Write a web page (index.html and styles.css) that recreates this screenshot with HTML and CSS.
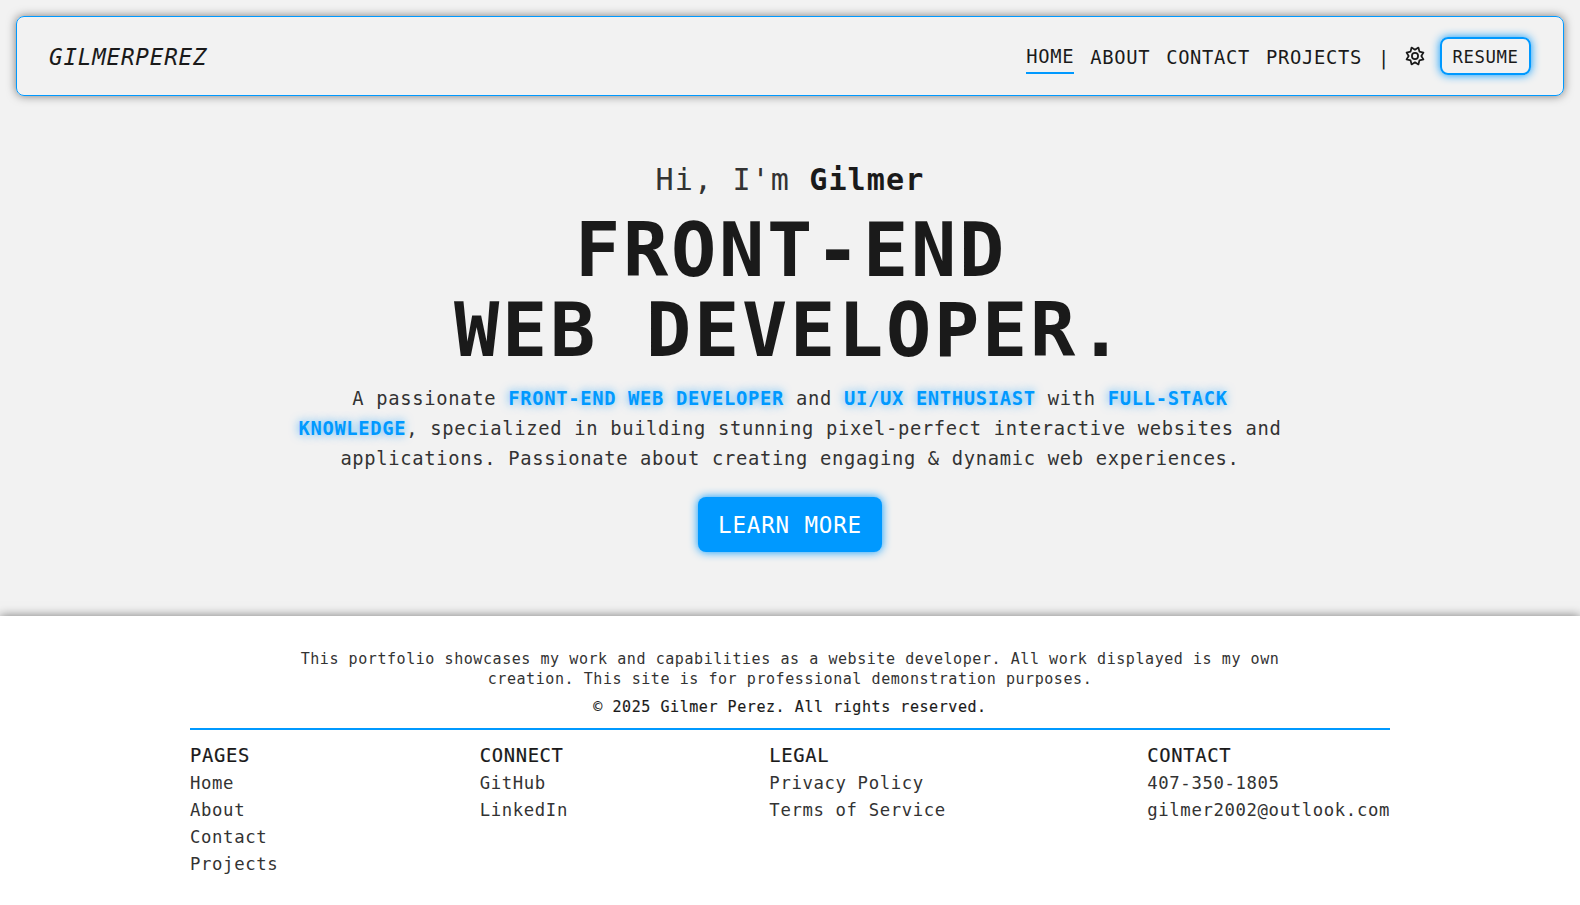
FILE: index.html
```html
<!DOCTYPE html>
<html lang="en">
<head>
<meta charset="utf-8">
<title>Gilmer Perez</title>
<link rel="stylesheet" href="styles.css">
</head>
<body>
<header class="site-header">
  <a class="logo">GILMERPEREZ</a>
  <nav class="nav">
    <a class="nav-link active">HOME</a>
    <a class="nav-link">ABOUT</a>
    <a class="nav-link">CONTACT</a>
    <a class="nav-link">PROJECTS</a>
    <span class="divider">|</span>
    <svg class="gear" viewBox="0 0 24 24" width="20" height="20">
      <path d="M12 4.4 L16.1 1.9 L17.3 6.7 L22.1 7.9 L19.6 12 L22.1 16.1 L17.3 17.3 L16.1 22.1 L12 19.6 L7.9 22.1 L6.7 17.3 L1.9 16.1 L4.4 12 L1.9 7.9 L6.7 6.7 L7.9 1.9 Z"/>
      <circle cx="12" cy="12" r="3.7"/>
    </svg>
    <a class="resume">RESUME</a>
  </nav>
</header>
<main class="hero">
  <p class="greeting">Hi, I'm <strong>Gilmer</strong></p>
  <h1 class="title">FRONT-END<br>WEB DEVELOPER.</h1>
  <p class="intro">A passionate <b>FRONT-END WEB DEVELOPER</b> and <b>UI/UX ENTHUSIAST</b> with <b>FULL-STACK<br>KNOWLEDGE</b>, specialized in building stunning pixel-perfect interactive websites and<br>applications. Passionate about creating engaging &amp; dynamic web experiences.</p>
  <a class="learn">LEARN MORE</a>
</main>
<footer class="site-footer">
  <p class="note">This portfolio showcases my work and capabilities as a website developer. All work displayed is my own<br>creation. This site is for professional demonstration purposes.</p>
  <p class="copyright">© 2025 Gilmer Perez. All rights reserved.</p>
  <div class="columns">
    <div class="column"><h2>PAGES</h2><a>Home</a><a>About</a><a>Contact</a><a>Projects</a></div>
    <div class="column"><h2>CONNECT</h2><a>GitHub</a><a>LinkedIn</a></div>
    <div class="column"><h2>LEGAL</h2><a>Privacy Policy</a><a>Terms of Service</a></div>
    <div class="column"><h2>CONTACT</h2><a>407-350-1805</a><a>gilmer2002@outlook.com</a></div>
  </div>
</footer>
</body>
</html>
```
FILE: styles.css
```css
* { box-sizing: border-box; margin: 0; padding: 0; letter-spacing: 0.0363em; }
body {
  height: 905px;
  overflow: hidden;
  display: flex;
  flex-direction: column;
  background: #f2f2f2;
  color: #1a1a1a;
  font-family: "DejaVu Sans Mono", monospace;
}
.site-header {
  flex: none;
  height: 80px;
  margin: 16px 16px 0;
  padding: 0 32px;
  display: flex;
  align-items: center;
  justify-content: space-between;
  border: 1px solid #0099ff;
  border-radius: 8px;
  box-shadow: 0 0 10px rgba(0, 0, 0, 0.5);
}
.logo { padding-top: 2px; font-size: 22.56px; line-height: 24px; font-style: italic; }
.nav { display: flex; align-items: center; gap: 16px; font-size: 18.8px; line-height: 24px; }
.nav-link { padding-top: 4px; }
.nav-link.active { padding: 7px 0 3px; border-bottom: 2px solid #0099ff; }
.divider { width: 10px; padding-top: 5px; }
.gear { margin: 0 -1px 0 1px; fill: none; stroke: #1a1a1a; stroke-width: 2.1; stroke-linejoin: round; }
.resume {
  width: 91px;
  height: 38px;
  padding-top: 1px;
  border: 2px solid #0099ff;
  border-radius: 8px;
  box-shadow: 0 0 10px #0099ff;
  font-size: 17.3px;
  line-height: 34px;
  text-align: center;
}
.hero { height: 520px; padding-top: 64px; text-align: center; }
.greeting { font-size: 30.08px; line-height: 40px; color: #333; }
.greeting strong { color: #1a1a1a; }
.title { margin-top: 10px; font-size: 75.2px; line-height: 80px; font-weight: 700; text-indent: 2px; }
.intro { margin-top: 14px; font-size: 18.8px; line-height: 30px; color: #333; }
.intro b { color: #0099ff; text-shadow: 0 0 10px rgba(0, 153, 255, 0.7); }
.learn {
  display: block;
  width: 184px;
  height: 55px;
  margin: 23px auto 0;
  padding-top: 1px;
  border-radius: 8px;
  background: #0099ff;
  box-shadow: 0 0 10px #0099ff;
  color: #fff;
  font-size: 22.56px;
  line-height: 55px;
}
.site-footer {
  flex: 1;
  padding: 33px 180px 0;
  background: #fff;
  box-shadow: 0 0 10px rgba(0, 0, 0, 0.5);
}
.note, .copyright { font-size: 15.04px; line-height: 20px; text-align: center; }
.note { color: #333; }
.copyright { margin-top: 8px; -webkit-text-stroke: 0.15px currentColor; }
.columns {
  display: flex;
  justify-content: space-between;
  margin: 11px 10px 0;
  padding-top: 12px;
  border-top: 2px solid #0099ff;
  font-size: 17.3px;
  line-height: 27px;
}
.column { display: flex; flex-direction: column; color: #333; }
.column h2 {
  height: 28px;
  color: #1a1a1a;
  font-size: 18.8px;
  line-height: 27px;
  font-weight: 400;
  -webkit-text-stroke: 0.2px currentColor;
}
```
